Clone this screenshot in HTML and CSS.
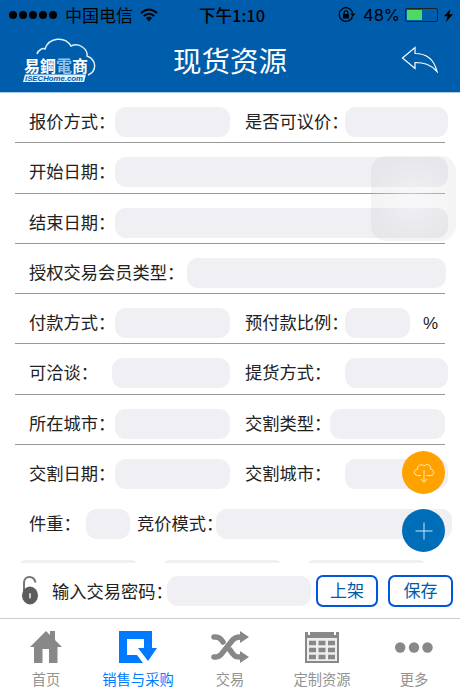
FILE: index.html
```
<!DOCTYPE html>
<html lang="zh-CN">
<head>
    <meta charset="UTF-8">
    <meta name="viewport" content="width=device-width, initial-scale=1.0">
    <title>现货资源</title>
    <link rel="stylesheet" href="styles.css">
</head>
<body>
    <header>
        <div class="status">
            <div class="signal"><i></i><i></i><i></i><i></i><i></i></div>
            <span class="carrier">中国电信</span>
            <svg class="wifi" width="18" height="14" viewBox="0 0 18 14">
                <path d="M1 5Q9-2 17 5M3.800 8Q9 3.500 14.200 8" fill="none" stroke="#000" stroke-width="2"/>
                <path d="M6 10Q9 7.500 12 10L9 13.500z"/>
            </svg>
            <span class="time">下午1:10</span>
            <svg class="rotate" width="18" height="16" viewBox="0 0 18 16">
                <path d="M14.500 9.500A6.800 6.800 0 1 1 14.600 6" fill="none" stroke="#000" stroke-width="1.200"/>
                <path d="M12.200 6.500h5.300L14.800 9.600zM5 7h6v4.500H5z"/>
                <path d="M6.200 7.500V5.500a1.800 1.800 0 0 1 3.600 0v2" fill="none" stroke="#000" stroke-width="1.100"/>
            </svg>
            <span class="percent">48%</span>
            <div class="battery"><div class="level"></div></div>
            <svg class="bolt" width="9" height="13" viewBox="0 0 9 13"><path d="M6.500 0L0 7.200h3.500L2 13 9 5.300H5.200z"/></svg>
        </div>
        <div class="nav">
            <div class="logo">
                <svg width="78" height="50" viewBox="0 0 78 50">
                    <path d="M17 18C19 13 23 12 25 13C29 1 45 0 51 10C60 6 68 14 67 20C77 24 77 35 68 39" fill="none" stroke="#d8eefb" stroke-width="1.500"/>
                    <text class="logo_cn" x="4" y="35.500" textLength="64" lengthAdjust="spacingAndGlyphs">易鋼<tspan class="dim">電</tspan>商</text>
                    <path d="M5 38.500H66L64 46H3z" fill="#e4f3fc"/>
                    <text class="logo_en" x="5" y="45" textLength="58" lengthAdjust="spacingAndGlyphs">iSECHome.com</text>
                </svg>
            </div>
            <h1>现货资源</h1>
            <svg class="back" width="38" height="28" viewBox="0 0 38 28">
                <path d="M1.500 12L14 1.500V7.500C25 7.500 33 13 36 25.500C29 18 23 16.500 14 16.500V22.500z" fill="none" stroke="#fff" stroke-width="1.200"/>
            </svg>
        </div>
    </header>

    <main>
        <div class="row">
            <label>报价方式：</label><div class="field"></div>
            <label class="second">是否可议价：</label><div class="field short"></div>
        </div>
        <div class="row">
            <label>开始日期：</label><div class="field full"></div>
        </div>
        <div class="row">
            <label>结束日期：</label><div class="field full"></div>
        </div>
        <div class="row">
            <label class="member">授权交易会员类型：</label><div class="field wide"></div>
        </div>
        <div class="row">
            <label>付款方式：</label><div class="field"></div>
            <label class="second">预付款比例：</label><div class="field rate"></div><span class="unit">%</span>
        </div>
        <div class="row">
            <label class="talk">可洽谈：</label><div class="field talk_field"></div>
            <label class="second">提货方式：</label><div class="field short"></div>
        </div>
        <div class="row">
            <label>所在城市：</label><div class="field"></div>
            <label class="second type">交割类型：</label><div class="field"></div>
        </div>
        <div class="row no_line">
            <label>交割日期：</label><div class="field"></div>
            <label class="second">交割城市：</label><div class="field short"></div>
        </div>
        <div class="row no_line">
            <label class="weight">件重：</label><div class="field small"></div>
            <label class="mode">竞价模式：</label><div class="field mode_field"></div>
        </div>
        <div class="next_row"><i></i><i></i><i></i></div>

        <div class="assistive"></div>
        <div class="fab cloud">
            <svg width="22" height="22" viewBox="0 0 22 22">
                <path d="M8 13.500H5C0 13 0 7.500 4.500 7.500C4 3 9 1.500 11 4C14 1 18 3 17.500 7C22 8 21.500 13 18 13.500H13.500M11 8V20M7.800 17L11 20.300L14.200 17" fill="none" stroke="#fff3d0" stroke-width=".9"/>
            </svg>
        </div>
        <div class="fab plus">
            <svg width="18" height="18" viewBox="0 0 18 18"><path d="M9 .5V17.500M.5 9H17.500" stroke="#cde6f7" stroke-width="1"/></svg>
        </div>
    </main>

    <div class="pay">
        <svg class="lock" width="18" height="30" viewBox="0 0 18 30">
            <path d="M3 16V8C3 0 13 0 14.500 7.500" fill="none" stroke="#777" stroke-width="2"/>
            <ellipse cx="9" cy="20.500" rx="8" ry="9" fill="#5c5c5c"/>
            <rect x="8" y="18" width="2" height="5.500" rx="1" fill="#ccc"/>
        </svg>
        <label>输入交易密码：</label>
        <div class="field pw"></div>
        <button class="up">上架</button>
        <button class="save">保存</button>
    </div>

    <footer>
        <div class="tab">
            <svg width="32" height="34" viewBox="0 0 32 34"><path d="M0 17L16 1L20 5V1H25V10L32 17H27.500V33H19V19H12.500V33H4V17z" fill="#888"/></svg>
            <span>首页</span>
        </div>
        <div class="tab on">
            <svg width="38" height="34" viewBox="0 0 38 34"><path d="M0 1H33V18H38L29 31L19 18H25V9H8V25H18L24 33H0z" fill="#007aff"/></svg>
            <span>销售与采购</span>
        </div>
        <div class="tab">
            <svg width="38" height="34" viewBox="0 0 38 34">
                <path d="M3 7H5C8 7 10 9 12 12M19 20L22 24C24 27 26 27 30 27M3 27H5C8 27 10 25 12 22L20 12C23 8 25 7 30 7" fill="none" stroke="#888" stroke-width="5.500" stroke-linecap="round"/>
                <path d="M29 1L38 7L29 13zM29 21L38 27L29 33z" fill="#888"/>
            </svg>
            <span>交易</span>
        </div>
        <div class="tab">
            <svg width="36" height="34" viewBox="0 0 36 34">
                <path d="M1 2H35V33H1z" fill="#888"/>
                <path d="M3 8H33V31H3z" fill="#eee"/>
                <path d="M5 0V5M31 0V5" stroke="#fff" stroke-width="2"/>
                <path d="M5 13H12M14.500 13H21.500M24 13H31M5 20H12M14.500 20H21.500M24 20H31M5 27H12M14.500 27H21.500M24 27H31" stroke="#888" stroke-width="4.500"/>
            </svg>
            <span>定制资源</span>
        </div>
        <div class="tab">
            <svg width="38" height="34" viewBox="0 0 38 34"><g fill="#888"><circle cx="5.200" cy="17.500" r="5.200"/><circle cx="19" cy="17.500" r="5.200"/><circle cx="32.500" cy="17.500" r="5.200"/></g></svg>
            <span>更多</span>
        </div>
    </footer>
</body>
</html>
```
FILE: styles.css
```
*{
    box-sizing: border-box;
}
body{
    margin: 0;
    width: 460px;
    height: 690px;
    overflow: hidden;
    display: flex;
    flex-direction: column;
    background-color: #fff;
    font-family: "Noto Sans CJK SC", sans-serif;
    color: #222;
}
svg{
    display: block;
    flex: none;
}
header{
    height: 93px;
    flex: none;
    background-color: #005dab;
    border-bottom: 1px solid #a9cbe6;
}
.status{
    display: flex;
    align-items: center;
    height: 30px;
    padding-left: 9px;
    color: #000;
    font-size: 17px;
    line-height: 30px;
    white-space: nowrap;
}
.signal{
    display: flex;
    gap: 2px;
    width: 56px;
}
.signal i{
    width: 8px;
    height: 8px;
    border-radius: 50%;
    background-color: #000;
}
.carrier{
    width: 75px;
}
.time{
    width: 139px;
    margin-left: 41px;
    font-weight: 500;
    font-size: 16.500px;
}
.percent{
    width: 42px;
    margin-left: 7px;
    font-family: Inter, sans-serif;
    font-size: 16.500px;
}
.battery{
    width: 33px;
    height: 14px;
    padding: 1px;
    border: 1px solid #222;
    border-radius: 2px;
}
.level{
    width: 15px;
    height: 10px;
    background-color: #4cd964;
}
.bolt{
    margin-left: 6px;
}
.nav{
    display: flex;
    height: 62px;
}
.logo{
    width: 173px;
    padding: 6px 0 0 20px;
}
.logo_cn{
    font-size: 16px;
    font-weight: 700;
    fill: #fff;
}
.dim{
    fill: #8fc5ec;
}
.logo_en{
    font: italic bold 8px "Liberation Sans", sans-serif;
    fill: #005dab;
}
h1{
    width: 228px;
    margin: 0;
    color: #fff;
    font-size: 28.500px;
    font-weight: 400;
    line-height: 60px;
}
.back{
    margin-top: 16px;
}
main{
    position: relative;
    height: 470px;
    flex: none;
    overflow: hidden;
}
.row{
    display: flex;
    align-items: flex-start;
    height: 50.300px;
    margin: 0 15px;
    padding: 14px 0 0 14px;
    border-bottom: 1px solid #999;
}
.no_line{
    border-color: transparent;
}
label{
    width: 86px;
    flex: none;
    font-size: 17.250px;
    line-height: 28px;
    white-space: nowrap;
}
.field{
    width: 115px;
    height: 30px;
    flex: none;
    border-radius: 11px;
    background-color: #efeff4;
}
.second{
    width: 100px;
    margin-left: 15px;
}
.short{
    width: 103px;
}
.full{
    width: 333px;
}
.member{
    width: 158px;
}
.wide{
    width: 259px;
}
.rate{
    width: 65px;
}
.unit{
    margin-left: 13px;
    font: 17px/32px "Liberation Sans", sans-serif;
}
.talk{
    width: 83px;
}
.talk_field{
    width: 118px;
}
.type{
    width: 85px;
}
.weight{
    width: 57px;
}
.small{
    width: 44px;
}
.mode{
    width: 79px;
    margin-left: 7px;
}
.mode_field{
    width: 236px;
}
.next_row{
    display: flex;
    gap: 25px;
    padding: 14px 0 0 19px;
}
.next_row i{
    width: 119px;
    height: 30px;
    border-radius: 6px;
    background-color: #efeff4;
}
.assistive{
    position: absolute;
    top: 63px;
    left: 371px;
    width: 85px;
    height: 85px;
    border-radius: 15px;
    background: radial-gradient(rgba(240, 240, 245, .5), rgba(190, 190, 190, .17) 70%);
}
.fab{
    position: absolute;
    left: 402px;
    width: 43px;
    height: 43px;
    border-radius: 50%;
    display: flex;
    align-items: center;
    justify-content: center;
}
.cloud{
    top: 358px;
    background-color: #ffa200;
}
.plus{
    top: 416px;
    background-color: #006db8;
}
.pay{
    display: flex;
    height: 55px;
    flex: none;
    padding: 12px 0 0 21px;
}
.pay label{
    width: 115px;
    margin-left: 13px;
    line-height: 32px;
}
.pw{
    width: 144px;
    margin-top: 1px;
}
.pay button{
    height: 32px;
    padding: 0;
    border: 2px solid #0055dc;
    border-radius: 7px;
    background-color: #fff;
    color: #005ba9;
    font-family: inherit;
    font-size: 17px;
    line-height: 24px;
}
.pay button.up{
    width: 62px;
    margin-left: 5px;
    padding-bottom: 2px;
}
.pay button.save{
    width: 65px;
    margin-left: 10px;
    padding-bottom: 2px;
}
footer{
    display: flex;
    height: 72px;
    flex: none;
    border-top: 1px solid #ccc;
}
.tab{
    width: 92px;
    display: flex;
    flex-direction: column;
    align-items: center;
    padding-top: 11px;
    color: #929292;
    font-size: 14.300px;
    line-height: 20px;
}
.tab span{
    margin-top: 5px;
}
.on{
    color: #007aff;
}
```
